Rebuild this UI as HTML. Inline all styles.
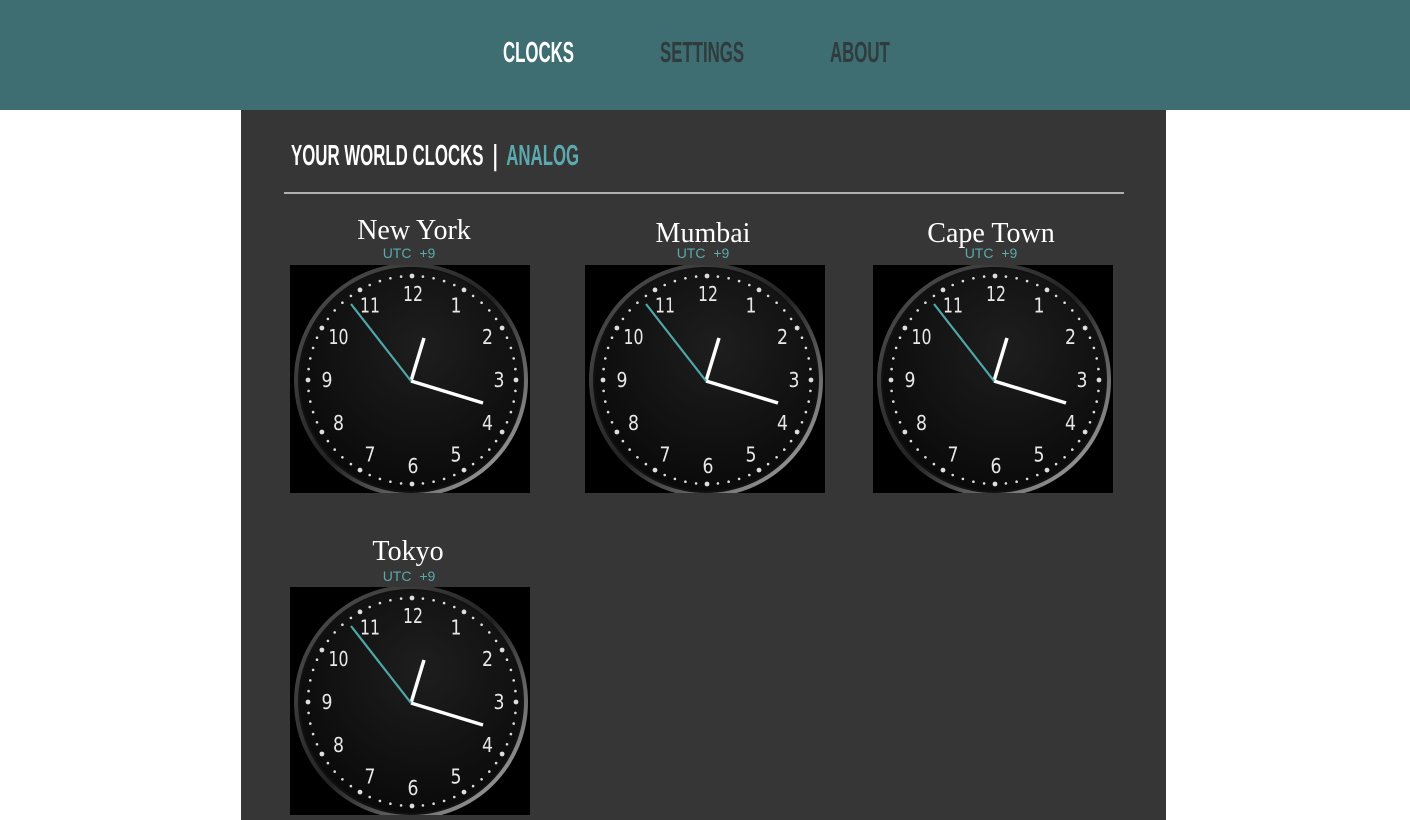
<!DOCTYPE html>
<html><head><style>
*{margin:0;padding:0;box-sizing:border-box}
body{width:1410px;height:820px;overflow:hidden;background:#fff;position:relative;font-family:"Liberation Sans",sans-serif}
.hdr{position:absolute;left:0;top:0;width:1410px;height:110px;background:#3e6e72}
.nav{position:absolute;top:37px;font-family:"Liberation Sans Narrow","Liberation Sans",sans-serif;font-weight:bold;font-size:29px;color:#2f3b3c;white-space:nowrap;transform:scaleX(.58);transform-origin:left}
.panel{position:absolute;left:241px;top:110px;width:925px;height:710px;background:#363636}
.ttl{position:absolute;left:291px;top:140px;font-family:"Liberation Sans Narrow","Liberation Sans",sans-serif;font-weight:bold;font-size:29px;color:#fff;white-space:nowrap;transform:scaleX(.58);transform-origin:left}
.hr{position:absolute;left:284px;top:192px;width:840px;height:2px;background:#b0b0b0}
.nm{position:absolute;width:240px;text-align:center;font-family:"Liberation Serif",serif;font-size:28px;color:#fff}
.utc{position:absolute;width:240px;text-align:center;font-size:14px;color:#5aaab0;word-spacing:4px}
svg.c{position:absolute;width:240px;height:228px;background:#000}
</style></head><body>
<div class="hdr"></div>
<div class="nav" style="left:503px;color:#fff">CLOCKS</div>
<div class="nav" style="left:660px">SETTINGS</div>
<div class="nav" style="left:830px">ABOUT</div>
<div class="panel"></div>
<div class="ttl">YOUR WORLD CLOCKS &nbsp;|&nbsp; <span style="color:#5aaab0">ANALOG</span></div>
<div class="hr"></div>

<div class="nm" style="left:294px;top:215px">New York</div><div class="utc" style="left:289px;top:245px">UTC +9</div>
<div class="nm" style="left:583px;top:218px">Mumbai</div><div class="utc" style="left:583px;top:245px">UTC +9</div>
<div class="nm" style="left:871px;top:218px">Cape Town</div><div class="utc" style="left:871px;top:245px">UTC +9</div>
<div class="nm" style="left:288px;top:536px">Tokyo</div><div class="utc" style="left:289px;top:568px">UTC +9</div>

<script>
function clock(x,y){
 var id='g'+x+'_'+y;
 var s='<svg class="c" style="left:'+x+'px;top:'+y+'px" viewBox="0 0 240 228"><defs><radialGradient id="'+id+'" cx="55%" cy="35%" r="65%"><stop offset="0" stop-color="#1e1e1e"/><stop offset="1" stop-color="#0a0a0a"/></radialGradient><linearGradient id="r'+id+'" x1="0" y1="0" x2="1" y2="1"><stop offset="0" stop-color="#555"/><stop offset=".5" stop-color="#222"/><stop offset="1" stop-color="#bbb"/></linearGradient></defs>';
 s+='<circle cx="121" cy="115" r="117" fill="url(#r'+id+')"/><circle cx="121" cy="115" r="113" fill="#111"/><circle cx="121" cy="115" r="111" fill="url(#'+id+')"/>';
 for(var i=0;i<60;i++){var a=i*Math.PI/30,r=i%5==0?2.4:1.3;s+='<circle cx="'+(122+104*Math.sin(a)).toFixed(1)+'" cy="'+(115-104*Math.cos(a)).toFixed(1)+'" r="'+r+'" fill="#ddd"/>';}
 for(var h=1;h<=12;h++){var a=h*Math.PI/6;s+='<text x="'+(123+86*Math.sin(a)).toFixed(1)+'" y="'+(122-86*Math.cos(a)).toFixed(1)+'" fill="#e8e8e8" font-family="DejaVu Sans,sans-serif" font-size="20" text-anchor="middle" textLength="'+(h>9?20:11)+'" lengthAdjust="spacingAndGlyphs">'+h+'</text>';}
 s+='<line x1="121" y1="116" x2="134" y2="73" stroke="#fff" stroke-width="3.5"/><line x1="121" y1="116" x2="193" y2="138" stroke="#fff" stroke-width="3.5"/><line x1="121" y1="116" x2="61" y2="39" stroke="#4fa8a8" stroke-width="2.2"/></svg>';
 document.write(s);
}
clock(290,265);clock(585,265);clock(873,265);clock(290,587);
</script>
</body></html>
